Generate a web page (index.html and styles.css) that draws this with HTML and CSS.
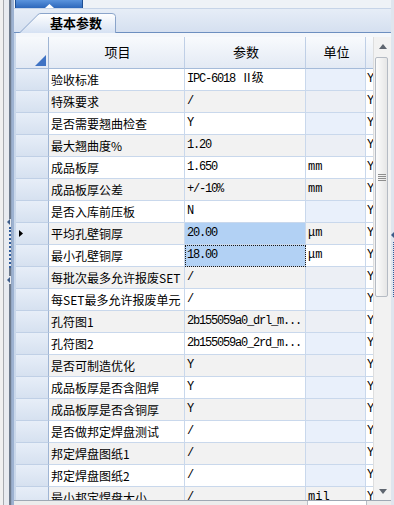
FILE: index.html
```html
<!DOCTYPE html>
<html>
<head lang="zh">
    <meta charset="UTF-8">
    <title>基本参数</title>
    <link rel="stylesheet" href="styles.css">
</head>
<body>
<div class="app">
    <!-- 左侧分隔条 -->
    <div class="side-left">
        <div class="splitter">
            <svg width="3" height="6" viewBox="0 0 3 6"><path d="M3 0 L0 3 L3 6 Z" fill="#3d5c88"/></svg>
            <span class="dots"></span>
        </div>
        <div class="splitter-low">
            <svg width="3" height="6" viewBox="0 0 3 6"><path d="M3 0 L0 3 L3 6 Z" fill="#3d5c88"/></svg>
        </div>
    </div>

    <div class="main">
        <div class="topbar">
            <div class="toptab active">
                <span class="toptab-label">基本信息</span>
                <svg class="notch" width="9" height="4" viewBox="0 0 9 4"><path d="M0 4 L4.5 0 L9 4 Z" fill="#fff"/></svg>
            </div>
            <div class="toptab">
                <span class="toptab-label">工程制作信息</span>
            </div>
        </div>

        <div class="tabstrip">
            <div class="tab">
                <svg class="tab-shape" width="97" height="20" viewBox="0 0 97 20">
                    <defs>
                        <linearGradient id="tabfill" x1="0" y1="0" x2="0" y2="1">
                            <stop offset="0" stop-color="#ffffff"/>
                            <stop offset="1" stop-color="#d6e2f3"/>
                        </linearGradient>
                    </defs>
                    <path d="M0.5 20 L19 1.6 Q20 0.5 22 0.5 L93 0.5 Q96.5 0.5 96.5 3.5 L96.5 20" fill="url(#tabfill)" stroke="#8aa4ca"/>
                </svg>
                <span class="tab-label">基本参数</span>
            </div>
        </div>

        <div class="gridwrap">
            <div class="grid">
                <div class="row head">
                    <div class="rh corner">
                        <svg width="11" height="11" viewBox="0 0 11 11"><path d="M11 0 L11 11 L0 11 Z" fill="#3f73c4"/></svg>
                    </div>
                    <div class="c">项目</div>
                    <div class="c">参数</div>
                    <div class="c">单位</div>
                    <div class="c flag"></div>
                </div>
                <div class="body">
                    <div class="row"><div class="rh"></div><div class="c name">验收标准</div><div class="c val">IPC-6018 Ⅱ级</div><div class="c unit empty"></div><div class="c flag">Y</div></div>
                    <div class="row alt"><div class="rh"></div><div class="c name">特殊要求</div><div class="c val">/</div><div class="c unit empty"></div><div class="c flag">Y</div></div>
                    <div class="row"><div class="rh"></div><div class="c name">是否需要翘曲检查</div><div class="c val">Y</div><div class="c unit empty"></div><div class="c flag">Y</div></div>
                    <div class="row alt"><div class="rh"></div><div class="c name">最大翘曲度%</div><div class="c val">1.20</div><div class="c unit empty"></div><div class="c flag">Y</div></div>
                    <div class="row"><div class="rh"></div><div class="c name">成品板厚</div><div class="c val">1.650</div><div class="c unit">mm</div><div class="c flag">Y</div></div>
                    <div class="row alt"><div class="rh"></div><div class="c name">成品板厚公差</div><div class="c val">+/-10%</div><div class="c unit">mm</div><div class="c flag">Y</div></div>
                    <div class="row"><div class="rh"></div><div class="c name">是否入库前压板</div><div class="c val">N</div><div class="c unit empty"></div><div class="c flag">Y</div></div>
                    <div class="row alt"><div class="rh current"><svg width="4" height="7" viewBox="0 0 4 7"><path d="M0 0 L4 3.5 L0 7 Z" fill="#000"/></svg></div><div class="c name">平均孔壁铜厚</div><div class="c val sel">20.00</div><div class="c unit">μm</div><div class="c flag">Y</div></div>
                    <div class="row"><div class="rh"></div><div class="c name">最小孔壁铜厚</div><div class="c val sel focus">18.00</div><div class="c unit">μm</div><div class="c flag">Y</div></div>
                    <div class="row alt"><div class="rh"></div><div class="c name">每批次最多允许报废SET</div><div class="c val">/</div><div class="c unit empty"></div><div class="c flag">Y</div></div>
                    <div class="row"><div class="rh"></div><div class="c name">每SET最多允许报废单元</div><div class="c val">/</div><div class="c unit empty"></div><div class="c flag">Y</div></div>
                    <div class="row alt"><div class="rh"></div><div class="c name">孔符图1</div><div class="c val">2b155059a0_drl_m...</div><div class="c unit empty"></div><div class="c flag">Y</div></div>
                    <div class="row"><div class="rh"></div><div class="c name">孔符图2</div><div class="c val">2b155059a0_2rd_m...</div><div class="c unit empty"></div><div class="c flag">Y</div></div>
                    <div class="row alt"><div class="rh"></div><div class="c name">是否可制造优化</div><div class="c val">Y</div><div class="c unit empty"></div><div class="c flag">Y</div></div>
                    <div class="row"><div class="rh"></div><div class="c name">成品板厚是否含阻焊</div><div class="c val">Y</div><div class="c unit empty"></div><div class="c flag">Y</div></div>
                    <div class="row alt"><div class="rh"></div><div class="c name">成品板厚是否含铜厚</div><div class="c val">Y</div><div class="c unit empty"></div><div class="c flag">Y</div></div>
                    <div class="row"><div class="rh"></div><div class="c name">是否做邦定焊盘测试</div><div class="c val">/</div><div class="c unit empty"></div><div class="c flag">Y</div></div>
                    <div class="row alt"><div class="rh"></div><div class="c name">邦定焊盘图纸1</div><div class="c val">/</div><div class="c unit empty"></div><div class="c flag">Y</div></div>
                    <div class="row"><div class="rh"></div><div class="c name">邦定焊盘图纸2</div><div class="c val">/</div><div class="c unit empty"></div><div class="c flag">Y</div></div>
                    <div class="row alt"><div class="rh"></div><div class="c name">最小邦定焊盘大小</div><div class="c val">/</div><div class="c unit">mil</div><div class="c flag">Y</div></div>
                </div>
            </div>

            <!-- 竖直滚动条 -->
            <div class="vscroll">
                <div class="sb-btn">
                    <svg width="8" height="5" viewBox="0 0 8 5"><path d="M0 5 L4 0 L8 5 Z" fill="#5f6670"/></svg>
                </div>
                <div class="sb-thumb">
                    <span class="grip"></span>
                </div>
                <div class="sb-space"></div>
                <div class="sb-btn">
                    <svg width="8" height="5" viewBox="0 0 8 5"><path d="M0 0 L8 0 L4 5 Z" fill="#5f6670"/></svg>
                </div>
            </div>
        </div>

        <div class="hscroll">
            <span class="hs-box"></span>
        </div>
    </div>

    <!-- 右侧分隔条 -->
    <div class="side-right">
        <svg width="3" height="6" viewBox="0 0 3 6"><path d="M3 0 L0 3 L3 6 Z" fill="#3d5c88"/></svg>
        <span class="dots"></span>
    </div>
</div>
</body>
</html>
```

FILE: styles.css
```css
* {
    margin: 0;
    padding: 0;
    box-sizing: border-box;
}

body {
    width: 394px;
    height: 505px;
    overflow: hidden;
    background-color: #eef1f5;
    font-family: "Noto Sans CJK SC", "Liberation Sans", sans-serif;
    font-size: 12px;
    color: #000;
}

.app {
    display: flex;
    height: 505px;
}

/* 左侧 */
.side-left {
    width: 12px;
    flex: none;
    display: flex;
    flex-direction: column;
    background: linear-gradient(to right, #f0f0f0 0, #f0f0f0 3px, #a8abb0 3px, #a8abb0 4px, #e8ebf0 4px, #e8ebf0 9px, #6d7a8c 9px, #6d7a8c 11px, #93a6c2 11px);
}

.splitter {
    margin-top: 219px;
    margin-left: 7px;
    width: 4px;
    display: flex;
    flex-direction: column;
    align-items: flex-start;
    gap: 2px;
    background-color: #e8ebf0;
}

.splitter .dots {
    width: 2px;
    height: 41px;
    margin-left: 2px;
    border-left: 2px dotted #2f5b9a;
}

.splitter-low {
    margin-top: 8px;
    margin-left: 7px;
    width: 4px;
    height: 8px;
    padding-top: 1px;
    background-color: #e8ebf0;
}

.side-left svg,
.side-right svg {
    display: block;
}

/* 主区域 */
.main {
    width: 379px;
    flex: none;
    display: flex;
    flex-direction: column;
    border-left: 2px solid #9db2d1;
}

.topbar {
    height: 9px;
    display: flex;
    background-color: #eef2f7;
    border-bottom: 1px solid #c6d4e8;
}

.toptab {
    display: flex;
    flex-direction: column;
    justify-content: flex-end;
    align-items: center;
    overflow: hidden;
    padding: 0 10px;
    color: #222;
}

.toptab.active {
    width: 68px;
    margin-left: 1px;
    color: #fff;
    font-weight: bold;
    background: linear-gradient(#5a93dd, #2d67bb);
    border-left: 1px solid #1f4f93;
    border-right: 1px solid #1f4f93;
}

.toptab-label {
    display: block;
    line-height: 14px;
    font-size: 13px;
    white-space: nowrap;
    margin-bottom: 4px;
}

.toptab .notch {
    display: block;
    flex: none;
}

.toptab:not(.active) .toptab-label {
    margin-bottom: 8px;
}

/* 页签 */
.tabstrip {
    height: 24px;
    display: flex;
    align-items: flex-end;
    background: linear-gradient(#e6edf7, #d5e0f0);
    border-bottom: 1px solid #6d8fc0;
}

.tab {
    position: relative;
    width: 97px;
    height: 20px;
    margin-left: 5px;
    margin-bottom: -1px;
}

.tab-shape {
    position: absolute;
    left: 0;
    top: 0;
}

.tab-label {
    position: relative;
    display: block;
    padding-left: 31px;
    line-height: 20px;
    font-size: 13px;
    font-weight: bold;
}

/* 表格 */
.gridwrap {
    height: 467px;
    display: flex;
    padding-top: 4px;
    padding-left: 2px;
    background: linear-gradient(to right, #c9d7ea 0, #c9d7ea 2px, #f4f7fb 2px);
}

.grid {
    width: 357px;
    flex: none;
    display: flex;
    flex-direction: column;
    background-color: #fff;
}

.body {
    height: 431px;
    overflow: hidden;
}

.row {
    display: grid;
    grid-template-columns: 33px 136px 121px 60px 7px;
    height: 22px;
}

.rh {
    display: flex;
    align-items: center;
    padding-left: 3px;
    background: linear-gradient(#e7eef8, #d6e1f0);
    border-right: 1px solid #9fb5d4;
    border-bottom: 1px solid #c0d0e6;
}

.c {
    padding-left: 2px;
    line-height: 21px;
    white-space: nowrap;
    overflow: hidden;
    background-color: #fff;
    border-right: 1px solid #c9d8ec;
    border-bottom: 1px solid #c9d8ec;
}

.row.alt .c {
    background-color: #f2f2f2;
}

.val,
.unit,
.flag {
    font-family: "Liberation Mono", "Noto Sans CJK SC", monospace;
    font-size: 12px;
    letter-spacing: -1.2px;
}

.unit {
    letter-spacing: 0;
}

.row .c.unit.empty {
    background-color: #e9f0fb;
}

.row.alt .c.unit.empty {
    background-color: #eceff5;
}

.row .c.val.sel {
    background-color: #b2d1f4;
}

.c.focus {
    outline: 1px dotted #1a1a1a;
    outline-offset: -1px;
}

.c.flag {
    padding-left: 1px;
    border-right: none;
    background-color: #fff;
}

.row.alt .c.flag {
    background-color: #fff;
}

.head {
    height: 32px;
}

.head .rh {
    align-items: flex-end;
    justify-content: flex-end;
    padding: 0 2px 2px 0;
    background: linear-gradient(#f7f9fc, #e2e9f4);
    border-bottom: 1px solid #a5bbd9;
}

.head .c {
    text-align: center;
    line-height: 30px;
    font-size: 13px;
    background: linear-gradient(#f8fafd, #e3eaf4);
    border-bottom: 1px solid #a5bbd9;
    border-right-color: #bfcfe6;
}

.head .c.flag {
    background: linear-gradient(#f8fafd, #e3eaf4);
}

.rh svg {
    display: block;
}

/* 滚动条 */
.vscroll {
    width: 18px;
    flex: none;
    display: flex;
    flex-direction: column;
    background-color: #f2f2f2;
    border-left: 1px solid #dedede;
}

.sb-btn {
    height: 18px;
    flex: none;
    display: flex;
    align-items: center;
    justify-content: center;
}

.sb-thumb {
    height: 240px;
    flex: none;
    margin: 2px 3px 0 1px;
    display: flex;
    align-items: center;
    justify-content: center;
    border: 1px solid #b5bbc4;
    border-radius: 2px;
    background: linear-gradient(to right, #fcfcfc, #e6e6e6);
}

.grip {
    width: 8px;
    height: 7px;
    background: repeating-linear-gradient(#8e8e8e 0, #8e8e8e 1px, transparent 1px, transparent 2px);
}

.sb-space {
    flex: 1;
}

.hscroll {
    height: 5px;
    display: flex;
    background-color: #ececec;
    border-top: 1px solid #9fa8b4;
}

.hs-box {
    width: 60px;
    margin-left: 293px;
    background-color: #fff;
    border-left: 1px solid #b9bec6;
    border-right: 1px solid #b9bec6;
}

/* 右侧 */
.side-right {
    width: 3px;
    flex: none;
    display: flex;
    flex-direction: column;
    align-items: flex-end;
    padding-top: 232px;
    gap: 4px;
    background-color: #dfe5ee;
}

.side-right .dots {
    width: 1px;
    height: 55px;
    border-left: 1px dotted #2f5b9a;
}
```
